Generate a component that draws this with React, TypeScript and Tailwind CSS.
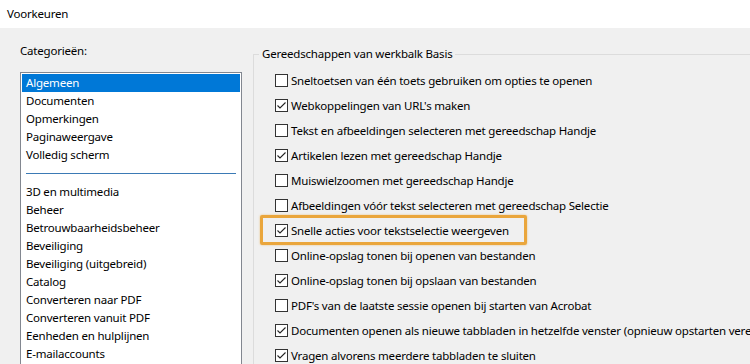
const fontStack = '"Noto Sans", "Liberation Sans", sans-serif';

const categoriesTop = ['Algemeen', 'Documenten', 'Opmerkingen', 'Paginaweergave', 'Volledig scherm'];

const categoriesBottom = [
  '3D en multimedia',
  'Beheer',
  'Betrouwbaarheidsbeheer',
  'Beveiliging',
  'Beveiliging (uitgebreid)',
  'Catalog',
  'Converteren naar PDF',
  'Converteren vanuit PDF',
  'Eenheden en hulplijnen',
  'E-mailaccounts'
];

const options = [
  { label: 'Sneltoetsen van één toets gebruiken om opties te openen', checked: false },
  { label: "Webkoppelingen van URL's maken", checked: true },
  { label: 'Tekst en afbeeldingen selecteren met gereedschap Handje', checked: false },
  { label: 'Artikelen lezen met gereedschap Handje', checked: true },
  { label: 'Muiswielzoomen met gereedschap Handje', checked: false },
  { label: 'Afbeeldingen vóór tekst selecteren met gereedschap Selectie', checked: false },
  { label: 'Snelle acties voor tekstselectie weergeven', checked: true, highlight: true },
  { label: 'Online-opslag tonen bij openen van bestanden', checked: false },
  { label: 'Online-opslag tonen bij opslaan van bestanden', checked: true },
  { label: "PDF's van de laatste sessie openen bij starten van Acrobat", checked: false },
  { label: 'Documenten openen als nieuwe tabbladen in hetzelfde venster (opnieuw opstarten vereist)', checked: true },
  { label: 'Vragen alvorens meerdere tabbladen te sluiten', checked: true }
];

function CheckBox({ checked }: { checked: boolean }): JSX.Element {
  return (
    <span className="flex h-[13px] w-[13px] shrink-0 items-center justify-center border border-[#333333] bg-white">
      {checked && (
        <svg width="11" height="11" viewBox="0 0 11 11" fill="none">
          <path d="M1.5 5.5 L4 8 L9.5 2.5" stroke="#222" strokeWidth="1.1" />
        </svg>
      )}
    </span>
  );
}

export default function App(): JSX.Element {
  return (
    <div
      className="flex h-[364px] w-[750px] flex-col overflow-hidden bg-[#f0f0f0] text-[11.5px] tracking-[-0.2px] text-black"
      style={{ fontFamily: fontStack }}
    >
      <div className="flex h-[28px] shrink-0 items-center bg-white pl-[7px]">Voorkeuren</div>

      <div className="flex min-h-0 flex-1">
        <div className="w-[253px] shrink-0 pl-[20px]">
          <p className="mt-[14px] h-[18px] leading-[18px]">Categorieën:</p>
          <div className="mt-[12px] w-[222px] border border-[#828790] bg-white p-px">
            {categoriesTop.map((name, i) => (
              <div
                className={`h-[18px] whitespace-nowrap pl-[4px] leading-[18px] ${
                  i === 0 ? 'bg-[#0078d7] text-white' : ''
                }`}
                key={name}
              >
                {name}
              </div>
            ))}
            <div className="flex h-[19px] items-center px-[4px]">
              <div className="h-px w-full bg-[#3b7ab5]" />
            </div>
            {categoriesBottom.map((name) => (
              <div className="h-[18px] whitespace-nowrap pl-[4px] leading-[18px]" key={name}>
                {name}
              </div>
            ))}
          </div>
        </div>

        <fieldset className="mt-[17px] min-w-0 flex-1 border-l border-t border-[#dcdcdc]">
          <legend className="ml-[5px] whitespace-nowrap px-[3px] leading-[18px]">
            Gereedschappen van werkbalk Basis
          </legend>
          <div className="mt-[5px] flex flex-col pl-[21px]">
            {options.map((opt) => (
              <div className="relative flex h-[25px] items-center gap-[3px] whitespace-nowrap" key={opt.label}>
                <CheckBox checked={opt.checked} />
                <span>{opt.label}</span>
                {opt.highlight && (
                  <span className="pointer-events-none absolute left-[-15px] top-[-3px] h-[30px] w-[267px] rounded-[2px] border-[3px] border-[#eaa63c] shadow-[0_0_2px_rgba(234,166,60,0.7)]" />
                )}
              </div>
            ))}
          </div>
        </fieldset>
      </div>
    </div>
  );
}
